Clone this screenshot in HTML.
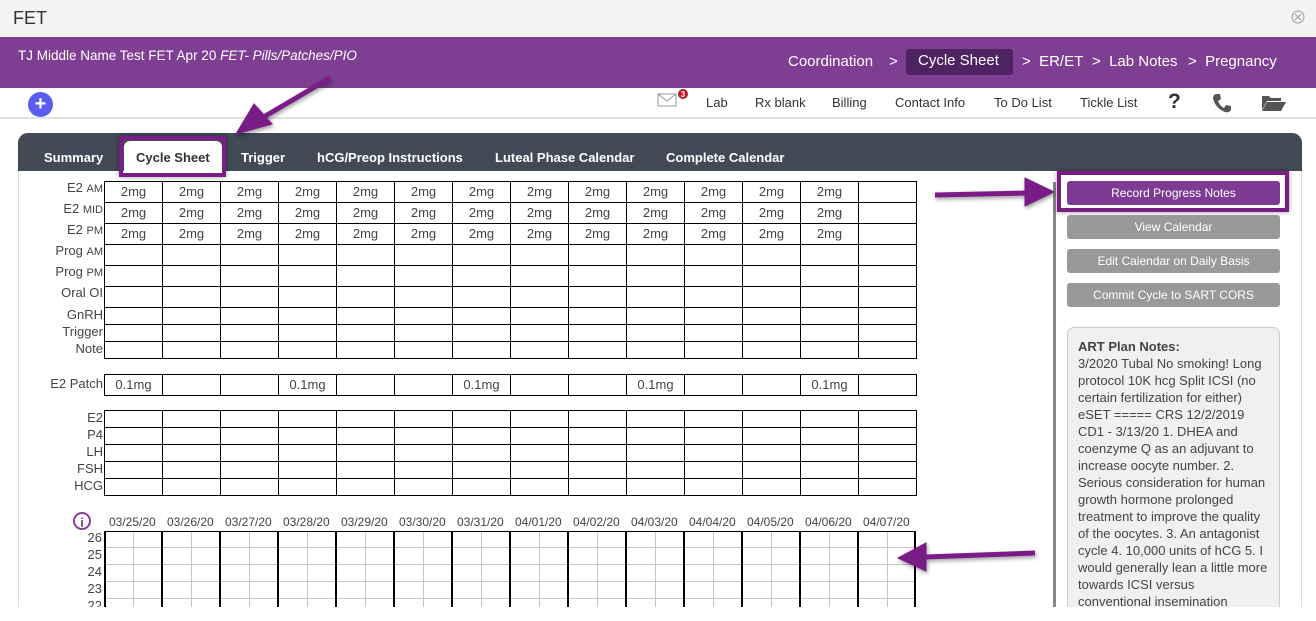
<!DOCTYPE html>
<html style="width:1316px;height:621px;overflow:hidden"><head><meta charset="utf-8"><style>
*{margin:0;padding:0;box-sizing:border-box}
body{width:1316px;height:621px;overflow:hidden;background:#fff;font-family:"Liberation Sans",sans-serif;position:relative;color:#333}
.a{position:absolute;white-space:nowrap}
.tb td{border:1px solid #000;width:58px;text-align:center;font-size:13px;color:#444;padding:0;line-height:14px;vertical-align:middle}
.tb{border-collapse:collapse;position:absolute;left:104px;table-layout:fixed}
.lbl{position:absolute;right:1213px;font-size:13px;color:#444;text-align:right;white-space:nowrap}
.lbl small{font-size:11px}
.btn{position:absolute;left:1067px;width:213px;height:24px;border-radius:3px;background:#999;color:#fff;font-size:12px;text-align:center;line-height:24px}
.tab{position:absolute;top:150px;color:#fff;font-weight:bold;font-size:13px}
.tl{position:absolute;top:95px;font-size:13px;color:#333}
.cr{position:absolute;top:53px;font-size:15px;color:#fff}
</style></head><body>
<div class="a" style="left:0;top:0;width:1316px;height:37px;background:#f4f4f4"></div>
<div class="a" style="left:13px;top:8px;font-size:18px;color:#333">FET</div>
<svg class="a" style="left:1291px;top:10px" width="14" height="14"><circle cx="7" cy="7" r="6" fill="none" stroke="#999"/><path d="M4 4L10 10M10 4L4 10" stroke="#999"/></svg>
<div class="a" style="left:0;top:37px;width:1316px;height:51px;background:#7e3e92"></div>
<div class="a" style="left:18px;top:48px;font-size:13.5px;color:#fff">TJ Middle Name Test FET Apr 20 <i>FET- Pills/Patches/PIO</i></div>
<div class="a" style="left:906px;top:49px;width:107px;height:26px;background:#4f2261;border-radius:3px"></div>
<div class="cr" style="left:788px">Coordination</div><div class="cr" style="left:889px">&gt;</div>
<div class="cr" style="left:918px;top:52px">Cycle Sheet</div>
<div class="cr" style="left:1022px">&gt;&nbsp; ER/ET</div>
<div class="cr" style="left:1092px">&gt;&nbsp; Lab Notes</div>
<div class="cr" style="left:1188px">&gt;&nbsp; Pregnancy</div>
<div class="a" style="left:0;top:117px;width:1316px;height:2px;background:#e2e2e2"></div>
<div class="a" style="left:28px;top:92px;width:25px;height:25px;border-radius:50%;background:#5b5df0;color:#fff;font-weight:bold;font-size:20px;text-align:center;line-height:24px">+</div>
<svg class="a" style="left:657px;top:89px" width="34" height="20"><rect x="1" y="5" width="18" height="12" fill="#fff" stroke="#999"/><path d="M1 5L10 12L19 5" fill="none" stroke="#999"/><circle cx="26" cy="5" r="5" fill="#c0142a"/><text x="26" y="8" font-size="8" fill="#fff" text-anchor="middle" font-family="Liberation Sans" font-weight="bold">3</text></svg>
<div class="tl" style="left:706px">Lab</div><div class="tl" style="left:755px">Rx blank</div><div class="tl" style="left:832px">Billing</div><div class="tl" style="left:895px">Contact Info</div><div class="tl" style="left:994px">To Do List</div><div class="tl" style="left:1080px">Tickle List</div>
<div class="a" style="left:1168px;top:90px;font-size:21px;font-weight:bold;color:#333">?</div>
<svg class="a" style="left:1211px;top:92px" width="22" height="22"><path d="M5 2 L9 2 L10 7 L7 9 Q9 14 13 16 L15 13 L20 14 L20 18 Q18 21 14 20 Q4 16 2 6 Q2 3 5 2Z" fill="#555"/></svg>
<svg class="a" style="left:1261px;top:94px" width="26" height="18"><path d="M1 2H8L10 4H20V7H6L1 16Z" fill="#555"/><path d="M6 8H25L20 17H1Z" fill="#555"/></svg>
<div class="a" style="left:18px;top:133px;width:1284px;height:500px;border:1px solid #ddd;border-radius:10px 10px 0 0;background:#fff"></div>
<div class="a" style="left:18px;top:133px;width:1284px;height:38px;background:#434a55;border-radius:10px 10px 0 0"></div>
<div class="a" style="left:124px;top:141px;width:98px;height:32px;background:#fff;border-radius:6px 6px 0 0"></div>
<div class="a" style="left:119px;top:136px;width:107px;height:41px;border:4px solid #7a1d85;box-shadow:0 0 5px rgba(0,0,0,.4)"></div>
<div class="tab" style="left:44px">Summary</div><div class="tab" style="left:136px;color:#333">Cycle Sheet</div><div class="tab" style="left:241px">Trigger</div><div class="tab" style="left:317px">hCG/Preop Instructions</div><div class="tab" style="left:495px">Luteal Phase Calendar</div><div class="tab" style="left:666px">Complete Calendar</div>
<div class="lbl" style="top:180px">E2 <small>AM</small></div>
<div class="lbl" style="top:201px">E2 <small>MID</small></div>
<div class="lbl" style="top:222px">E2 <small>PM</small></div>
<div class="lbl" style="top:243px">Prog <small>AM</small></div>
<div class="lbl" style="top:264px">Prog <small>PM</small></div>
<div class="lbl" style="top:285px">Oral OI</div>
<div class="lbl" style="top:307px">GnRH</div>
<div class="lbl" style="top:324px">Trigger</div>
<div class="lbl" style="top:341px">Note</div>
<div class="lbl" style="top:376px">E2 Patch</div>
<div class="lbl" style="top:410px">E2</div><div class="lbl" style="top:427px">P4</div><div class="lbl" style="top:444px">LH</div><div class="lbl" style="top:461px">FSH</div><div class="lbl" style="top:478px">HCG</div>
<table class="tb" style="top:181px">
<tr style="height:21px"><td>2mg</td><td>2mg</td><td>2mg</td><td>2mg</td><td>2mg</td><td>2mg</td><td>2mg</td><td>2mg</td><td>2mg</td><td>2mg</td><td>2mg</td><td>2mg</td><td>2mg</td><td></td></tr>
<tr style="height:21px"><td>2mg</td><td>2mg</td><td>2mg</td><td>2mg</td><td>2mg</td><td>2mg</td><td>2mg</td><td>2mg</td><td>2mg</td><td>2mg</td><td>2mg</td><td>2mg</td><td>2mg</td><td></td></tr>
<tr style="height:21px"><td>2mg</td><td>2mg</td><td>2mg</td><td>2mg</td><td>2mg</td><td>2mg</td><td>2mg</td><td>2mg</td><td>2mg</td><td>2mg</td><td>2mg</td><td>2mg</td><td>2mg</td><td></td></tr>
<tr style="height:21px"><td></td><td></td><td></td><td></td><td></td><td></td><td></td><td></td><td></td><td></td><td></td><td></td><td></td><td></td></tr>
<tr style="height:21px"><td></td><td></td><td></td><td></td><td></td><td></td><td></td><td></td><td></td><td></td><td></td><td></td><td></td><td></td></tr>
<tr style="height:21px"><td></td><td></td><td></td><td></td><td></td><td></td><td></td><td></td><td></td><td></td><td></td><td></td><td></td><td></td></tr>
<tr style="height:17px"><td></td><td></td><td></td><td></td><td></td><td></td><td></td><td></td><td></td><td></td><td></td><td></td><td></td><td></td></tr>
<tr style="height:17px"><td></td><td></td><td></td><td></td><td></td><td></td><td></td><td></td><td></td><td></td><td></td><td></td><td></td><td></td></tr>
<tr style="height:17px"><td></td><td></td><td></td><td></td><td></td><td></td><td></td><td></td><td></td><td></td><td></td><td></td><td></td><td></td></tr>
</table>
<table class="tb" style="top:374px">
<tr style="height:21px"><td>0.1mg</td><td></td><td></td><td>0.1mg</td><td></td><td></td><td>0.1mg</td><td></td><td></td><td>0.1mg</td><td></td><td></td><td>0.1mg</td><td></td></tr>
</table>
<table class="tb" style="top:410px">
<tr style="height:17px"><td></td><td></td><td></td><td></td><td></td><td></td><td></td><td></td><td></td><td></td><td></td><td></td><td></td><td></td></tr>
<tr style="height:17px"><td></td><td></td><td></td><td></td><td></td><td></td><td></td><td></td><td></td><td></td><td></td><td></td><td></td><td></td></tr>
<tr style="height:17px"><td></td><td></td><td></td><td></td><td></td><td></td><td></td><td></td><td></td><td></td><td></td><td></td><td></td><td></td></tr>
<tr style="height:17px"><td></td><td></td><td></td><td></td><td></td><td></td><td></td><td></td><td></td><td></td><td></td><td></td><td></td><td></td></tr>
<tr style="height:17px"><td></td><td></td><td></td><td></td><td></td><td></td><td></td><td></td><td></td><td></td><td></td><td></td><td></td><td></td></tr>
</table>
<svg class="a" style="left:60px;top:508px" width="870" height="130" font-family="Liberation Sans" font-size="12" fill="#444">
<circle cx="22" cy="13" r="8" fill="none" stroke="#8a3c9a" stroke-width="2"/><text x="22" y="19" text-anchor="middle" font-weight="bold" font-size="13" fill="#8a3c9a">i</text>
<g>
<text x="49" y="18">03/25/20</text><text x="107" y="18">03/26/20</text><text x="165" y="18">03/27/20</text><text x="223" y="18">03/28/20</text><text x="281" y="18">03/29/20</text><text x="339" y="18">03/30/20</text><text x="397" y="18">03/31/20</text><text x="455" y="18">04/01/20</text><text x="513" y="18">04/02/20</text><text x="571" y="18">04/03/20</text><text x="629" y="18">04/04/20</text><text x="687" y="18">04/05/20</text><text x="745" y="18">04/06/20</text><text x="803" y="18">04/07/20</text>
</g>
<g font-size="13" text-anchor="end"><text x="42" y="34">26</text><text x="42" y="51">25</text><text x="42" y="68">24</text><text x="42" y="85">23</text><text x="42" y="102">22</text></g>
<g stroke="#c8c4c8" stroke-width="1">
<path d="M44 39.5H856M44 56.5H856M44 73.5H856M44 90.5H856"/>
<path d="M73.5 23V130M131.5 23V130M189.5 23V130M247.5 23V130M305.5 23V130M363.5 23V130M421.5 23V130M479.5 23V130M537.5 23V130M595.5 23V130M653.5 23V130M711.5 23V130M769.5 23V130M827.5 23V130"/>
</g>
<path d="M44 23.5H856" stroke="#000"/>
<g stroke="#000" stroke-width="2"><path d="M45 23V130M102 23V130M160 23V130M218 23V130M276 23V130M334 23V130M392 23V130M450 23V130M508 23V130M566 23V130M624 23V130M682 23V130M740 23V130M798 23V130M855 23V130"/></g>
</svg>
<div class="a" style="left:1053px;top:182px;width:3px;height:460px;background:#888"></div>
<div class="btn" style="top:181px;background:#7f3b93">Record Progress Notes</div>
<div class="a" style="left:1057px;top:171px;width:232px;height:41px;border:4px solid #7a1d85;box-shadow:0 0 5px rgba(0,0,0,.4)"></div>
<div class="btn" style="top:215px">View Calendar</div>
<div class="btn" style="top:249px">Edit Calendar on Daily Basis</div>
<div class="btn" style="top:283px">Commit Cycle to SART CORS</div>
<div class="a" style="left:1067px;top:327px;width:213px;height:320px;background:#eff0f0;border:1px solid #ccc;border-radius:7px;padding:10px 10px;font-size:13px;line-height:17px;color:#444;white-space:normal"><b>ART Plan Notes:</b><br>3/2020 Tubal No smoking! Long protocol 10K hcg Split ICSI (no certain fertilization for either) eSET ===== CRS 12/2/2019 CD1 - 3/13/20 1. DHEA and coenzyme Q as an adjuvant to increase oocyte number. 2. Serious consideration for human growth hormone prolonged treatment to improve the quality of the oocytes. 3. An antagonist cycle 4. 10,000 units of hCG 5. I would generally lean a little more towards ICSI versus conventional insemination</div>
<div class="a" style="left:0;top:607px;width:1316px;height:14px;background:#fff"></div>
<svg class="a" style="left:0;top:0" width="1316" height="621">
<defs><filter id="s"><feDropShadow dx="1" dy="2" stdDeviation="2" flood-opacity=".4"/></filter></defs>
<g fill="#7a1d85" stroke="#7a1d85" filter="url(#s)">
<path d="M330 78L262 118" stroke-width="5"/><path d="M236 134L254 104L272 124Z"/>
<path d="M935 195L1028 193" stroke-width="5"/><path d="M1054 192L1025 178L1025 206Z"/>
<path d="M1035 553L925 557" stroke-width="5"/><path d="M898 558L926 543L926 571Z"/>
</g></svg>
</body></html>
